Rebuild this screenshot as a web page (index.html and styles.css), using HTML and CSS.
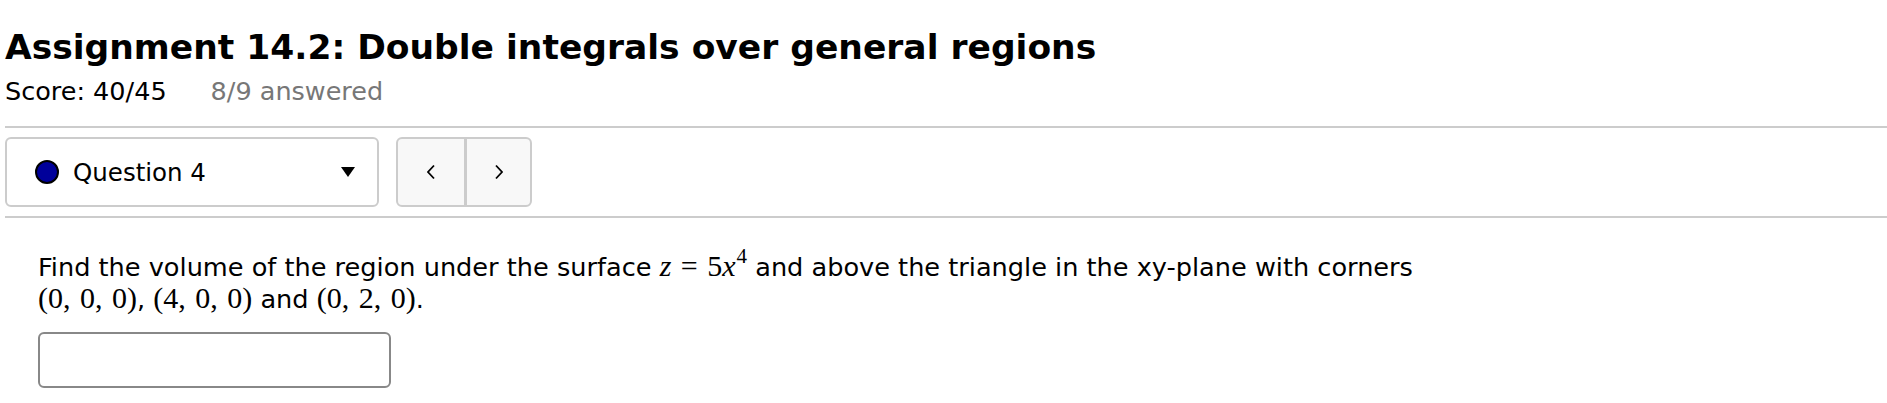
FILE: index.html
```html
<!DOCTYPE html>
<html>
<head>
<meta charset="utf-8">
<link rel="stylesheet" href="styles.css">
</head>
<body>
<div class="page">
  <h1 class="title">Assignment 14.2: Double integrals over general regions</h1>
  <div class="score-line">
    <span class="score">Score: 40/45</span>
    <span class="answered">8/9 answered</span>
  </div>
  <div class="rule"></div>
  <div class="toolbar">
    <div class="select">
      <span class="dot"></span>
      <span class="select-label">Question 4</span>
      <span class="caret"></span>
    </div>
    <div class="nav">
      <button class="nav-btn" aria-label="Previous">
        <svg width="12" height="18" viewBox="0 0 12 18"><path d="M9 2.5 L3 9 L9 15.5" fill="none" stroke="#000" stroke-width="1.8"/></svg>
      </button>
      <button class="nav-btn" aria-label="Next">
        <svg width="12" height="18" viewBox="0 0 12 18"><path d="M3 2.5 L9 9 L3 15.5" fill="none" stroke="#000" stroke-width="1.8"/></svg>
      </button>
    </div>
  </div>
  <div class="rule"></div>
  <div class="question">
    <p class="prompt">Find the volume of the region under the surface <span class="math"><i>z</i>&nbsp;=&nbsp;5<i>x</i><sup>4</sup></span> and above the triangle in the xy-plane with corners <span class="math">(0, 0, 0)</span>, <span class="math">(4, 0, 0)</span> and <span class="math">(0, 2, 0)</span>.</p>
    <input class="answer" type="text">
  </div>
</div>
</body>
</html>
```
FILE: styles.css
```css
html, body {
  margin: 0;
  padding: 0;
  background: #fff;
}
body {
  font-family: "DejaVu Sans", sans-serif;
  color: #000;
}
.page {
  padding: 0 0 0 5px;
}
.title {
  margin: 25px 0 0 0;
  font-size: 34.5px;
  line-height: 44px;
  font-weight: bold;
}
.score-line {
  margin-top: 7px;
  font-size: 25.5px;
  line-height: 30px;
  display: flex;
  gap: 44px;
}
.answered {
  color: #777;
}
.rule {
  height: 0;
  border-top: 2px solid #ccc;
}
.score-line + .rule {
  margin-top: 20px;
}
.toolbar {
  display: flex;
  gap: 17px;
  margin: 9px 0 9px 0;
  height: 70px;
}
.select {
  box-sizing: border-box;
  width: 374px;
  height: 70px;
  border: 2px solid #ccc;
  border-radius: 6px;
  display: flex;
  align-items: center;
  padding: 0 22px 0 28px;
}
.dot {
  width: 20px;
  height: 20px;
  border-radius: 50%;
  background: #00009a;
  border: 2px solid #000;
  flex: none;
}
.select-label {
  margin-left: 14px;
  font-size: 24.5px;
  flex: 1;
}
.caret {
  width: 0;
  height: 0;
  border-left: 7px solid transparent;
  border-right: 7px solid transparent;
  border-top: 10px solid #000;
}
.nav {
  display: flex;
  box-sizing: border-box;
  height: 70px;
  border: 2px solid #ccc;
  border-radius: 6px;
  background: #f8f8f8;
  overflow: hidden;
}
.nav-btn {
  width: 66px;
  height: 100%;
  border: none;
  background: transparent;
  display: flex;
  align-items: center;
  justify-content: center;
  padding: 0;
}
.nav-btn + .nav-btn {
  border-left: 3px solid #ccc;
}
.question {
  padding: 33px 0 0 33px;
}
.prompt {
  margin: 0;
  max-width: 1420px;
  font-size: 25.6px;
  line-height: 32px;
}
.math {
  font-family: "Liberation Serif", "DejaVu Serif", serif;
  font-size: 30px;
  line-height: 1;
  white-space: nowrap;
  word-spacing: 2px;
}
.math sup {
  font-size: 21px;
  line-height: 0;
  vertical-align: 13px;
  margin-left: 1px;
}
.answer {
  display: block;
  box-sizing: border-box;
  margin-top: 17px;
  width: 353px;
  height: 56px;
  border: 2px solid #888;
  border-radius: 6px;
  font-size: 22px;
}
```
